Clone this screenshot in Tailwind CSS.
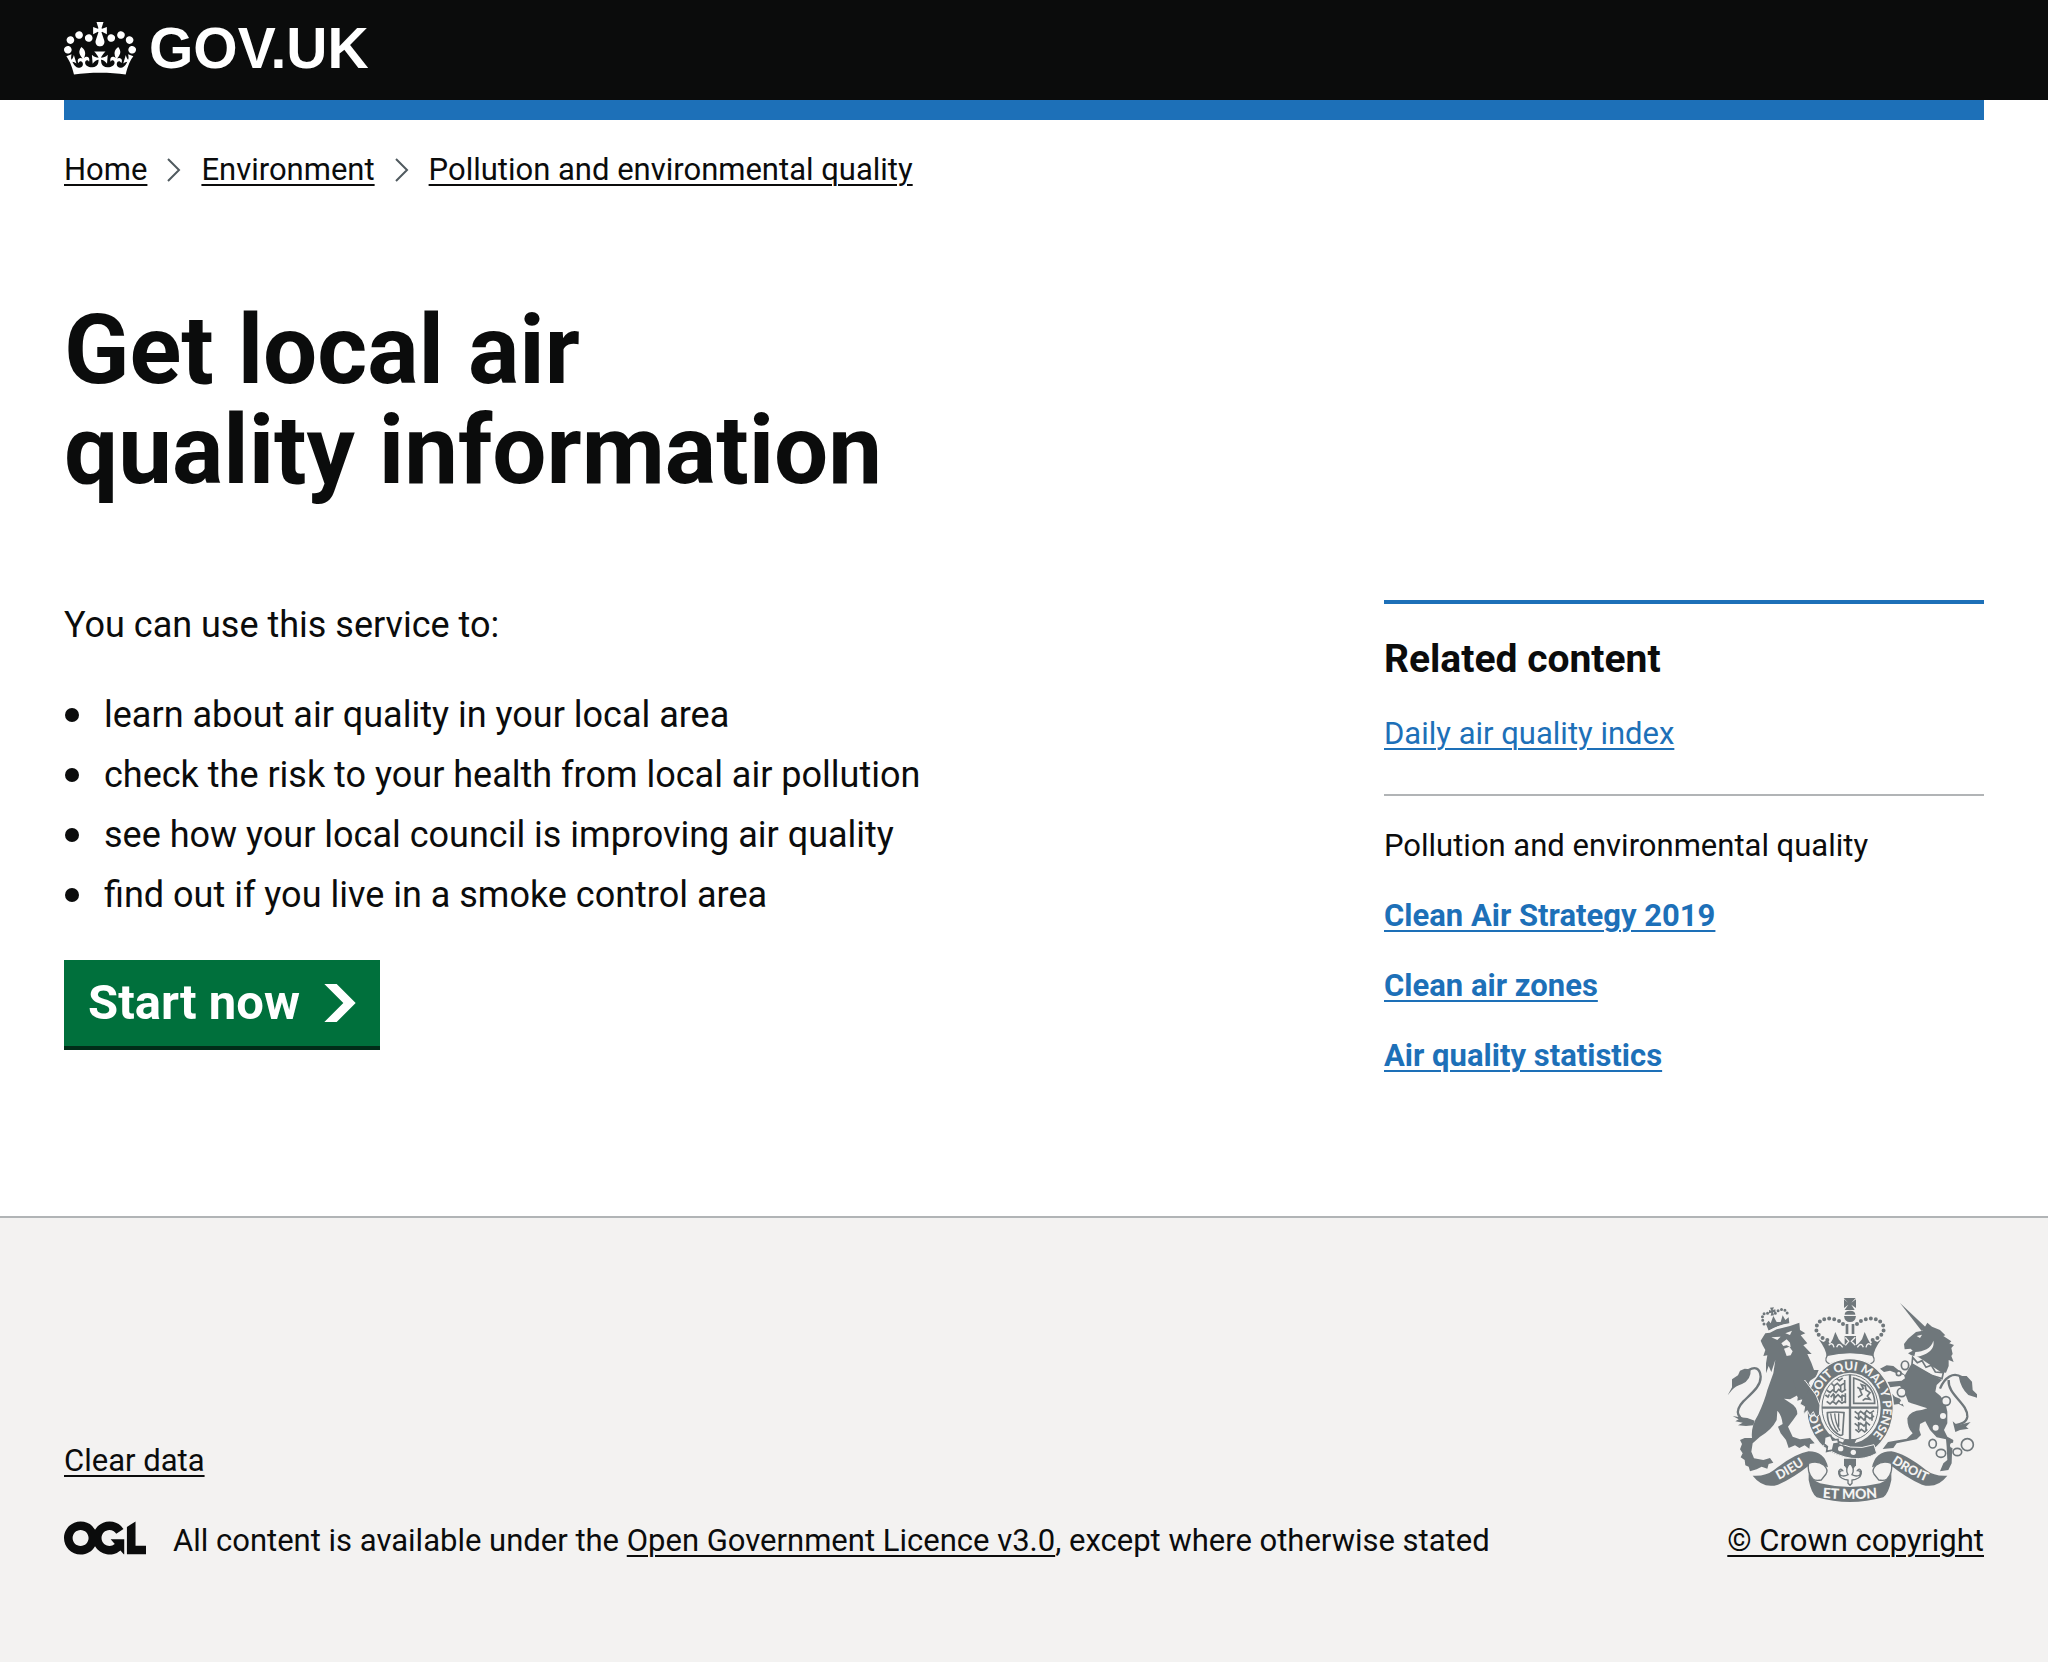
<!DOCTYPE html>
<html lang="en">
<head>
<meta charset="utf-8">
<meta name="viewport" content="width=device-width, initial-scale=1">
<title>Get local air quality information - GOV.UK</title>
<script src="https://cdn.jsdelivr.net/npm/@tailwindcss/browser@4"></script>
</head>
<body class="flex min-h-screen flex-col bg-[#f3f2f1] font-['Roboto','Liberation_Sans',sans-serif] text-[31px] leading-10 text-[#0b0c0c]">

<header class="bg-[#0b0c0c] px-16">
  <div class="flex h-[100px] items-center pb-1">
    <a href="#" class="flex items-center gap-[13px] text-white">
      <svg class="h-[53px] w-[72px] shrink-0" viewBox="0 0 132 97" fill="currentColor" aria-hidden="true"><path fill-rule="evenodd" d="M25 30.2c3.5 1.5 7.7-.2 9.1-3.7 1.5-3.6-.2-7.8-3.9-9.2-3.6-1.4-7.6.3-9.1 3.9-1.4 3.5.3 7.5 3.9 9zM9 39.5c3.6 1.5 7.8-.2 9.2-3.7 1.5-3.6-.2-7.8-3.9-9.1-3.6-1.5-7.6.2-9.1 3.8-1.4 3.5.3 7.5 3.8 9zM4.4 57.2c3.5 1.5 7.7-.2 9.1-3.8 1.5-3.6-.2-7.7-3.9-9.1-3.5-1.5-7.6.3-9.1 3.8-1.4 3.5.3 7.6 3.9 9.1zm38.3-21.4c3.5 1.5 7.7-.2 9.1-3.8 1.5-3.6-.2-7.7-3.9-9.1-3.6-1.5-7.6.3-9.1 3.8-1.3 3.6.4 7.7 3.9 9.1zm64.4-5.6c-3.6 1.5-7.8-.2-9.1-3.7-1.5-3.6.2-7.8 3.8-9.2 3.6-1.4 7.7.3 9.2 3.9 1.3 3.5-.4 7.5-3.9 9zm15.9 9.3c-3.6 1.5-7.7-.2-9.1-3.7-1.5-3.6.2-7.8 3.7-9.1 3.6-1.5 7.7.2 9.2 3.8 1.5 3.5-.3 7.5-3.8 9zm4.7 17.7c-3.6 1.5-7.8-.2-9.2-3.8-1.5-3.6.2-7.7 3.9-9.1 3.6-1.5 7.7.3 9.2 3.8 1.3 3.5-.4 7.6-3.9 9.1zM89.3 35.8c-3.6 1.5-7.8-.2-9.2-3.8-1.4-3.6.2-7.7 3.9-9.1 3.6-1.5 7.7.3 9.2 3.8 1.4 3.6-.3 7.7-3.9 9.1zM69.7 17.7l8.9 4.7V9.3l-8.9 2.8c-.2-.3-.5-.6-.9-.9L72.4 0H59.6l3.5 11.2c-.3.3-.6.5-.9.9l-8.8-2.8v13.1l8.8-4.7c.3.3.6.7.9.9l-5 15.4v.1c-.2.8-.4 1.6-.4 2.4 0 4.1 3.1 7.5 7 8.1h.2c.3 0 .7.1 1 .1.4 0 .7 0 1-.1h.2c4-.6 7.1-4.1 7.1-8.1 0-.8-.1-1.7-.4-2.4V34l-5.1-15.4c.4-.2.7-.6 1-.9zM66 92.8c16.9 0 32.8 1.1 47.1 3.2 4-16.9 8.9-26.7 14-33.5l-9.6-3.4c1 4.9 1.1 7.2 0 10.2-1.5-1.4-3-4.3-4.2-8.7L108.6 76c2.8-2 5-3.2 7.5-3.3-4.4 9.4-10 11.9-13.6 11.2-4.3-.8-6.3-4.6-5.6-7.9 1-4.7 5.7-5.9 8-.5 4.3-8.7-3-11.4-7.6-8.8 7.1-7.2 7.9-13.5 2.1-21.1-8 6.1-8.1 12.3-4.5 20.8-4.7-5.4-12.1-2.5-9.5 6.2 3.4-5.2 7.9-2 7.2 3.1-.6 4.3-6.4 7.8-13.5 7.2-10.3-.9-10.9-8-11.2-13.8 2.5-.5 7.1 1.8 11 7.3L80.2 60c-4.1 4.4-8 5.3-12.3 5.4 1.4-4.4 8-11.6 8-11.6H55.5s6.4 7.2 7.9 11.6c-4.2-.1-8-1-12.3-5.4l1.4 16.4c3.9-5.5 8.5-7.7 10.9-7.3-.3 5.8-.9 12.8-11.1 13.8-7.2.6-12.9-2.9-13.5-7.2-.7-5 3.8-8.3 7.1-3.1 2.7-8.7-4.6-11.6-9.4-6.2 3.7-8.5 3.6-14.7-4.6-20.8-5.8 7.6-5 13.9 2.2 21.1-4.7-2.6-11.9.1-7.7 8.8 2.3-5.5 7.1-4.2 8.1.5.7 3.3-1.3 7.1-5.7 7.9-3.5.7-9-1.8-13.5-11.2 2.5.1 4.7 1.3 7.5 3.3l-4.7-15.4c-1.2 4.4-2.7 7.2-4.3 8.7-1.1-3-.9-5.3 0-10.2l-9.5 3.4c5 6.9 9.9 16.7 14 33.5 14.8-2.1 30.8-3.2 47.7-3.2z"/></svg>
      <span class="font-['Liberation_Sans',Arial,sans-serif] text-[57px] leading-[60px] font-bold">GOV.UK</span>
    </a>
  </div>
</header>

<div class="bg-white px-16 pb-[140px]">
  <div class="h-5 bg-[#1d70b8]"></div>

  <nav aria-label="Breadcrumb" class="pt-[30px]">
    <ol class="flex flex-wrap items-center gap-5">
      <li><a href="#" class="underline decoration-2 underline-offset-4">Home</a></li>
      <li class="flex items-center gap-5">
        <svg class="h-6 w-[14px]" viewBox="0 0 14 24" fill="none" stroke="#505a5f" stroke-width="2" aria-hidden="true"><path d="M1 1l11 11L1 23"/></svg>
        <a href="#" class="underline decoration-2 underline-offset-4">Environment</a>
      </li>
      <li class="flex items-center gap-5">
        <svg class="h-6 w-[14px]" viewBox="0 0 14 24" fill="none" stroke="#505a5f" stroke-width="2" aria-hidden="true"><path d="M1 1l11 11L1 23"/></svg>
        <a href="#" class="underline decoration-2 underline-offset-4">Pollution and environmental quality</a>
      </li>
    </ol>
  </nav>

  <main class="pt-[110px]">
    <h1 class="text-8xl leading-[100px] font-bold">Get local air<br>quality information</h1>

    <div class="flex items-start justify-between gap-16 pt-[100px]">
      <div class="min-w-0 flex-1 text-4xl leading-[50px]">
        <p>You can use this service to:</p>
        <ul class="mt-10 flex flex-col gap-[10px]">
          <li class="flex items-center gap-[25px] before:ml-px before:size-[14px] before:rounded-full before:bg-[#0b0c0c] before:content-['']">learn about air quality in your local area</li>
          <li class="flex items-center gap-[25px] before:ml-px before:size-[14px] before:rounded-full before:bg-[#0b0c0c] before:content-['']">check the risk to your health from local air pollution</li>
          <li class="flex items-center gap-[25px] before:ml-px before:size-[14px] before:rounded-full before:bg-[#0b0c0c] before:content-['']">see how your local council is improving air quality</li>
          <li class="flex items-center gap-[25px] before:ml-px before:size-[14px] before:rounded-full before:bg-[#0b0c0c] before:content-['']">find out if you live in a smoke control area</li>
        </ul>
        <button type="button" class="mt-10 flex h-[90px] items-center gap-6 border-b-4 border-[#002d18] bg-[#00703c] px-6 text-[49px] font-bold text-white">
          Start now
          <svg class="h-[38px] w-8" viewBox="0 0 33 40" fill="currentColor" aria-hidden="true"><path d="M0 0h13l20 20-20 20H0l20-20z"/></svg>
        </button>
      </div>

      <aside class="w-[600px] shrink-0 border-t-4 border-[#1d70b8] pt-[30px]">
        <h2 class="text-[39px] leading-[50px] font-bold">Related content</h2>
        <p class="mt-[30px] border-b-2 border-[#b1b4b6] pb-10"><a href="#" class="text-[#1d70b8] underline decoration-2 underline-offset-4">Daily air quality index</a></p>
        <h3 class="mt-[30px]">Pollution and environmental quality</h3>
        <ul class="mt-[30px] flex flex-col gap-[30px] font-bold text-[#1d70b8]">
          <li><a href="#" class="underline decoration-2 underline-offset-4">Clean Air Strategy 2019</a></li>
          <li><a href="#" class="underline decoration-2 underline-offset-4">Clean air zones</a></li>
          <li><a href="#" class="underline decoration-2 underline-offset-4">Air quality statistics</a></li>
        </ul>
      </aside>
    </div>
  </main>
</div>

<footer class="border-t-2 border-[#b1b4b6] px-16 pt-[78px] pb-[100px]">
  <div class="flex items-end justify-between gap-16">
    <div>
      <a href="#" class="underline decoration-2 underline-offset-4">Clear data</a>
      <div class="mt-10 flex items-start gap-[27px]">
        <svg class="h-[34px] w-[82px] shrink-0" viewBox="0 0 483.2 195.7" fill="currentColor" aria-hidden="true"><path d="M421.5 142.8V.1l-50.7 32.3v161.1h112.4v-50.7zm-122.3-9.6A47.12 47.12 0 0 1 221 97.8c0-26 21.1-47.1 47.1-47.1 16.7 0 31.4 8.7 39.7 21.8l42.7-27.2A97.63 97.63 0 0 0 268.1 0c-36.5 0-68.3 20.1-85.1 49.7A98 98 0 0 0 97.8 0C43.9 0 0 43.9 0 97.8s43.9 97.8 97.8 97.8c36.5 0 68.3-20.1 85.1-49.7a97.76 97.76 0 0 0 149.6 25.4l19.4 22.2h3v-87.8h-80l24.3 27.5zM97.8 145c-26 0-47.1-21.1-47.1-47.1s21.1-47.1 47.1-47.1 47.1 21.1 47.1 47.1S123.8 145 97.8 145"/></svg>
        <span>All content is available under the <a href="#" class="underline decoration-2 underline-offset-4">Open Government Licence v3.0</a>, except where otherwise stated</span>
      </div>
    </div>

    <div class="flex w-[264px] shrink-0 flex-col items-center gap-[18px]">
      <svg class="h-[207px] w-[250px]" viewBox="51 48 750 621" fill="#6f777b" role="img" aria-label="Royal coat of arms">
        <defs>
          <path id="garter" d="M420 496A99 113 0 0 1 420 270A99 113 0 0 1 420 496"/>
          <path id="dieu" d="M188 609Q245 582 300 542"/>
          <path id="mon" d="M322 652Q420 662 518 652"/>
          <path id="droit" d="M532 540Q595 584 662 610"/>
        </defs>

        <!-- lion -->
        <path d="M152 182L166 160L180 158L200 148L240 138L268 128L270 150L286 160L272 166L292 190L280 196L305 222L292 222L304 248L312 270L326 270L318 290L300 302L296 310L318 345L330 375L328 405L318 412L310 395L300 408L292 392L280 402L284 380L270 372L276 358L262 362L264 345L240 358L222 356L240 368Q262 380 262 402Q250 420 234 440L248 470L270 478L300 474L314 490L300 492L298 506L284 496L268 504L255 496L236 504L228 480L212 460L204 440L218 432Q215 405 202 392L200 420Q185 450 150 470L128 490L124 515L132 535L160 540L180 534L190 548L176 552L172 566L155 560L140 568L120 574L116 560L106 556L104 540L92 532L98 520L90 508L96 492L90 480L104 474L126 474Q122 440 144 405Q165 360 172 330L190 280L196 240L184 276L176 258L168 280L168 250L172 226L160 228L166 210L158 196Z"/>
        <path d="M184 172L212 170L202 180ZM226 160L246 152L240 165ZM214 190L230 178L240 188L242 202L230 196L220 198ZM222 206L238 200L248 214L242 226L230 228Z" fill="#f3f2f1"/>
        <path d="M130 428C76 420 74 392 100 364C130 335 152 318 152 290C150 262 134 260 116 270" fill="none" stroke="#6f777b" stroke-width="7"/>
        <path d="M53 346L66 322L66 298L84 286L90 272L104 266L122 268Q124 300 96 312Q76 318 66 330ZM68 408L90 412L112 414L134 422L130 436L108 438L84 436L98 428L76 424L86 418Z"/>
        <!-- lion's crown -->
        <path d="M168 132L176 122L182 130L190 108L200 126L212 126L218 106L226 120L236 112L238 130Q206 134 176 152Z"/>
        <path d="M174 154Q204 136 240 132" fill="none" stroke="#f3f2f1" stroke-width="3"/>
        <path d="M162 132C150 104 162 92 182 104M196 100C210 82 232 84 234 110" fill="none" stroke="#6f777b" stroke-width="9" stroke-dasharray="0 11" stroke-linecap="round"/>
        <path d="M180 83L192 82L188 90L196 88L197 99L189 96L192 106L182 107L184 98L177 100L177 90L184 92Z"/>

        <!-- unicorn -->
        <path d="M570 69L652 146L635 153Z"/>
        <path d="M638 152L652 128L666 140L690 150L706 166L700 168L724 184L718 190L732 195L724 204L728 222L724 228L731 246L716 240L716 258L708 278L692 276L660 254L626 232L604 226L594 220L608 212L602 206L584 208L582 192L594 176L618 156Z"/>
        <path d="M612 232C650 226 676 210 670 182C664 206 640 214 616 216Z" fill="#f3f2f1"/>
        <path d="M620 168L636 164L630 174Z" fill="#f3f2f1"/>
        <path d="M608 232L622 248L636 242L648 262L664 256L676 276L700 278L696 296L664 286L606 252Z" fill="#f3f2f1" stroke="#6f777b" stroke-width="5"/>
        <path d="M604 252L696 300L680 315L676 335Q706 355 712 395L712 430L702 450L712 470L730 480L726 520L725 550L715 570L690 574L700 550L712 540L710 500L708 478L680 472L660 450Q650 432 646 424L630 432L628 450L633 465L620 478L560 490L550 504L518 507L534 486L555 482L590 476L608 460Q592 445 592 415Q600 392 635 390L652 385Q610 372 595 366L585 340L570 318L540 322L535 330L555 350L570 356L582 380L566 372L550 374L538 350L525 322L530 306L575 302L585 295L582 285L560 280L540 272L522 276L510 266L530 256L550 258L565 270L585 285Z"/>
        <path d="M690 326C704 292 730 274 756 292M716 300C712 344 774 370 772 410C770 428 752 432 734 436" fill="none" stroke="#6f777b" stroke-width="7"/>
        <path d="M746 288L770 288L786 305L788 330L803 345L803 354L775 345Q752 325 746 288ZM728 424L742 436L782 426L768 440L776 446L750 450L736 456Z"/>
        <g fill="#f3f2f1" stroke="#6f777b" stroke-width="5">
          <ellipse cx="585" cy="256" rx="11" ry="13"/><circle cx="566" cy="280" r="7"/><circle cx="575" cy="337" r="13"/><circle cx="708" cy="363" r="13"/>
          <ellipse cx="668" cy="491" rx="11" ry="13"/><ellipse cx="693" cy="520" rx="14" ry="12"/><ellipse cx="742" cy="516" rx="13" ry="11"/><circle cx="772" cy="494" r="18"/>
        </g>
        <g fill="#f3f2f1"><circle cx="699" cy="408" r="9"/><circle cx="677" cy="443" r="9"/><circle cx="728" cy="496" r="8"/><circle cx="574" cy="368" r="5"/></g>

        <!-- crown -->
        <path d="M401 54H437L424 68L438 58V84L424 74L434 90H404L415 74L402 84V58L414 68ZM404 104Q404 92 420 92Q436 92 436 104ZM402 108H438Q436 126 420 126Q404 126 402 108Z"/>
        <path d="M352 180C292 160 322 104 372 118Q394 122 402 136M488 180C548 160 518 104 468 118Q446 122 438 136" fill="none" stroke="#6f777b" stroke-width="12" stroke-dasharray="0 15" stroke-linecap="round"/>
        <path d="M411 132V162M429 132V162" stroke="#6f777b" stroke-width="8"/>
        <path d="M326 178L340 186L352 180L360 192L368 178L376 156L386 178L396 190L404 196L404 168H438V196L446 190L456 178L464 156L474 178L482 192L490 180L502 186L514 178Q490 210 490 232Q420 214 350 232Q350 210 326 178Z"/>
        <path d="M356 196Q368 184 372 202M398 202Q386 184 380 202M442 202Q454 184 460 202M484 196Q472 184 468 202M406 172L416 184L406 196M436 172L424 184L436 196" fill="none" stroke="#f3f2f1" stroke-width="4"/>
        <path d="M352 226Q420 210 488 226Q500 246 480 252Q420 226 360 252Q340 246 352 226Z" fill="#f3f2f1" stroke="#6f777b" stroke-width="4"/>

        <!-- garter -->
        <ellipse cx="420" cy="384" rx="130" ry="148" stroke="#f3f2f1" stroke-width="4"/>
        <ellipse cx="420" cy="384" rx="92" ry="106" fill="#f3f2f1"/>
        <text fill="#f3f2f1" class="font-['Lato','Liberation_Sans',sans-serif] text-[36px] font-black"><textPath href="#garter" startOffset="14%">HONI SOIT QUI MAL Y PENSE</textPath></text>
        <path d="M352 470Q420 520 492 494L500 520Q430 560 340 500Z" fill="#6f777b" stroke="#f3f2f1" stroke-width="3"/>
        <g fill="#f3f2f1"><circle cx="392" cy="506" r="8"/><circle cx="430" cy="517" r="8"/></g>
        <path d="M344 472L362 466L368 480L384 478L386 490L372 492L368 510L350 514L352 500L342 492Z" fill="#f3f2f1" stroke="#6f777b" stroke-width="5"/>
        <!-- lion's paw over the garter -->
        <path d="M284 300L318 345L330 375L328 405L318 412L310 395L300 408L292 392L280 402L284 380L270 372L276 358L264 345Z" stroke="#f3f2f1" stroke-width="3"/>
        <path d="M250 300H282L300 326L278 360L262 350Z"/>
        <!-- quartered shield -->
        <ellipse cx="420" cy="382" rx="84" ry="98" fill="none" stroke="#6f777b" stroke-width="3"/>
        <path d="M420 284V480M336 383H504" stroke="#6f777b" stroke-width="7"/>
        <g fill="none" stroke="#6f777b" stroke-width="5">
          <path d="M350 330l10 8 8-8 10 8 8-10 10 8 12-8M346 345l8 6 4-8M362 352l8-10 6 10 8-8 8 8 6-6 10 6M350 364l10 8 8-8 10 8 8-10 10 8 12-8M364 310l8 8 10-8 8 8 12-8M380 296l8 6 10-8M372 318v16M392 316v20M372 342v20M396 344v20M404 300v30M406 340v30"/>
          <path d="M434 394l10 8 8-8 10 8 8-10 10 8 12-8M434 410l12 8 6-8 10 10 8-12 10 8 12-8M434 430l10 8 8-8 10 8 8-10 10 8M436 448l10 8 8-8 10 8 8-8M446 398v20M466 398v24M446 426v24M468 424v26M486 400v22"/>
          <path d="M431 294V370H494Q494 312 431 294Z"/>
          <path d="M444 352l12-8-6-14 10-4-6-12 12 4 2 12 12 8-8 10 8 10-14-2-8 6M452 328l-10-6"/>
          <path d="M352 398Q376 394 402 398L398 460Q400 466 390 466Q352 446 352 398Z"/>
          <path d="M362 400Q366 436 384 456M374 400Q376 430 390 452M386 400V440" stroke-width="4"/>
        </g>
        <path d="M402 480L440 476L432 494H396Z"/>

        <!-- fleur-de-lis -->
        <path d="M402 536H438V556L430 566H410L402 556Z"/>
        <path d="M420 550Q404 566 414 584Q400 592 390 584Q386 572 398 572Q392 562 386 574Q384 592 404 598L414 600V610L420 616L426 610V600L436 598Q456 592 454 574Q448 562 442 572Q454 572 450 584Q440 592 426 584Q436 566 420 550Z" fill="#f3f2f1" stroke="#6f777b" stroke-width="4"/>

        <!-- motto ribbon -->
        <path d="M128 587Q166 590 192 570Q256 520 296 514Q344 514 354 562L336 556Q316 544 300 554Q250 594 204 614Q160 628 128 587Z"/>
        <path d="M712 587Q674 590 648 570Q584 520 544 514Q496 514 486 562L504 556Q524 544 540 554Q590 594 636 614Q680 628 712 587Z"/>
        <path d="M296 550Q322 540 342 556Q356 570 348 582L334 600Q316 604 308 596Q290 574 296 550ZM544 550Q518 540 498 556Q484 570 492 582L506 600Q524 604 532 596Q550 574 544 550Z" fill="#f3f2f1" stroke="#6f777b" stroke-width="4"/>
        <path d="M296 574Q302 600 330 610Q420 632 510 610Q538 600 544 574L544 600Q536 640 520 652Q420 680 320 652Q304 640 296 600Z"/>
        <g fill="#f3f2f1" class="font-['Lato','Liberation_Sans',sans-serif] font-black">
          <text text-anchor="middle" class="text-[38px]"><textPath href="#dieu" startOffset="50%">DIEU</textPath></text>
          <text text-anchor="middle" class="text-[42px]"><textPath href="#mon" startOffset="50%">ET MON</textPath></text>
          <text text-anchor="middle" class="text-[38px]"><textPath href="#droit" startOffset="50%">DROIT</textPath></text>
        </g>
      </svg>
      <a href="#" class="self-end underline decoration-2 underline-offset-4">© Crown copyright</a>
    </div>
  </div>
</footer>
</body>
</html>
